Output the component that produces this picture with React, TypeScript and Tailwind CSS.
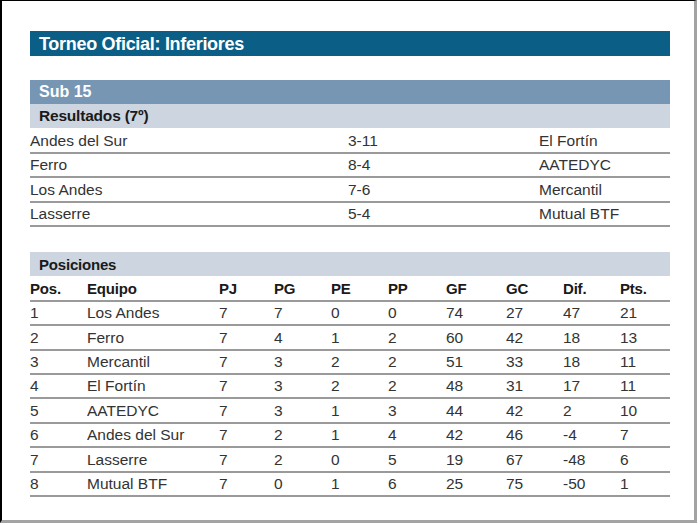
import React from "react";

const results = [
  ["Andes del Sur", "3-11", "El Fortín"],
  ["Ferro", "8-4", "AATEDYC"],
  ["Los Andes", "7-6", "Mercantil"],
  ["Lasserre", "5-4", "Mutual BTF"],
];
const resultHeights = ["h-[25px]", "h-[24px]", "h-[25px]", "h-[24px]"];

const standings = [
  ["1", "Los Andes", "7", "7", "0", "0", "74", "27", "47", "21"],
  ["2", "Ferro", "7", "4", "1", "2", "60", "42", "18", "13"],
  ["3", "Mercantil", "7", "3", "2", "2", "51", "33", "18", "11"],
  ["4", "El Fortín", "7", "3", "2", "2", "48", "31", "17", "11"],
  ["5", "AATEDYC", "7", "3", "1", "3", "44", "42", "2", "10"],
  ["6", "Andes del Sur", "7", "2", "1", "4", "42", "46", "-4", "7"],
  ["7", "Lasserre", "7", "2", "0", "5", "19", "67", "-48", "6"],
  ["8", "Mutual BTF", "7", "0", "1", "6", "25", "75", "-50", "1"],
];
const standingHeights = ["h-[24px]", "h-[25px]", "h-[24px]", "h-[24px]", "h-[25px]", "h-[24px]", "h-[25px]", "h-[24px]"];

const headers = ["Pos.", "Equipo", "PJ", "PG", "PE", "PP", "GF", "GC", "Dif.", "Pts."];

const gridCols = "grid grid-cols-[57px_132px_55px_57px_57px_58px_60px_57px_57px_50px]";

export default function App() {
  return (
    <div className="w-[700px] h-[525px] bg-white" style={{ fontFamily: '"Liberation Sans", Arial, sans-serif' }}>
      <div className="w-[697px] h-[523px] border-t border-l-2 border-t-black border-l-black border-r-[3px] border-b-[3px] border-r-[#a3a3a3] border-b-[#a3a3a3] pl-[28px] pt-[30px]">
        <div className="w-[640px]">
          <div className="h-[25px] bg-[#0b5f86] flex items-center pl-[9px]">
            <span className="text-white font-bold text-[18px] tracking-[-0.3px] leading-none">Torneo Oficial: Inferiores</span>
          </div>

          <div className="mt-[24px] h-[24px] bg-[#7796b3] flex items-center pl-[9px]">
            <span className="text-white font-bold text-[16px] leading-none">Sub 15</span>
          </div>
          <div className="h-[24px] bg-[#ccd5e0] flex items-center pl-[9px]">
            <span className="text-[#1a1a1a] font-bold text-[15.5px] leading-none tracking-[-0.2px]">Resultados (7º)</span>
          </div>
          <div className="pt-[1px]">
            {results.map((r, i) => (
              <div key={i} className={`grid grid-cols-[318px_191px_131px] ${resultHeights[i]} items-center border-b-2 border-[#9a9a9a] text-[15.5px] text-[#333333] leading-none`}>
                <span>{r[0]}</span>
                <span>{r[1]}</span>
                <span>{r[2]}</span>
              </div>
            ))}
          </div>

          <div className="mt-[25px] h-[24px] bg-[#ccd5e0] flex items-center pl-[9px]">
            <span className="text-[#1a1a1a] font-bold text-[15px] leading-none tracking-[-0.2px]">Posiciones</span>
          </div>
          <div className={`${gridCols} h-[26px] items-center border-b-2 border-[#9a9a9a] text-[15px] font-bold text-[#1a1a1a] leading-none tracking-[-0.2px]`}>
            {headers.map((h) => (
              <span key={h}>{h}</span>
            ))}
          </div>
          {standings.map((r, i) => (
            <div key={i} className={`${gridCols} ${standingHeights[i]} items-center border-b-2 border-[#9a9a9a] text-[15.5px] text-[#333333] leading-none`}>
              {r.map((c, j) => (
                <span key={j}>{c}</span>
              ))}
            </div>
          ))}
        </div>
      </div>
    </div>
  );
}
